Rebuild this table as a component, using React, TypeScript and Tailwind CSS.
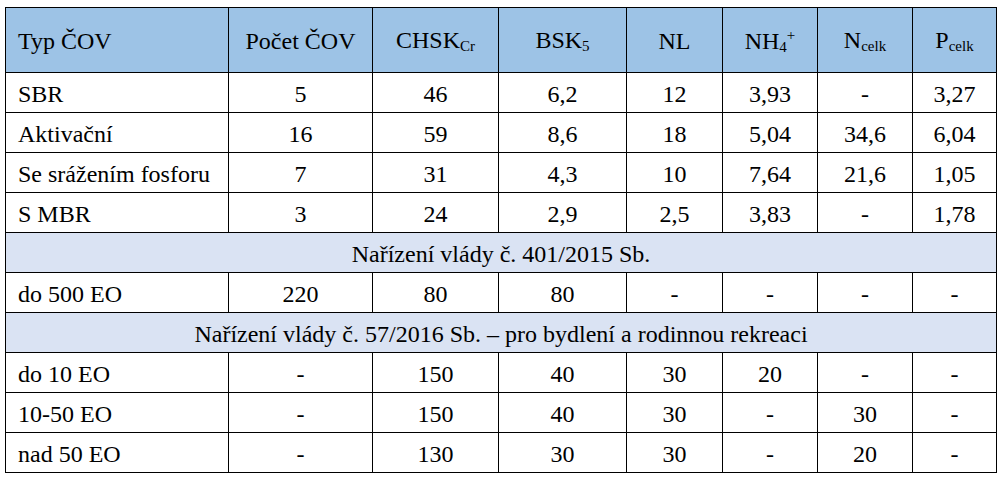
import React from "react";

type Row = string[];

const dataTop: Row[] = [
  ["SBR", "5", "46", "6,2", "12", "3,93", "-", "3,27"],
  ["Aktivační", "16", "59", "8,6", "18", "5,04", "34,6", "6,04"],
  ["Se srážením fosforu", "7", "31", "4,3", "10", "7,64", "21,6", "1,05"],
  ["S MBR", "3", "24", "2,9", "2,5", "3,83", "-", "1,78"],
];

const nv401: Row[] = [["do 500 EO", "220", "80", "80", "-", "-", "-", "-"]];

const nv57: Row[] = [
  ["do 10 EO", "-", "150", "40", "30", "20", "-", "-"],
  ["10-50 EO", "-", "150", "40", "30", "-", "30", "-"],
  ["nad 50 EO", "-", "130", "30", "30", "-", "20", "-"],
];

const serif = "[font-family:'Liberation_Serif','Times_New_Roman',serif]";
const cell = "border border-black h-[40px] pt-[2px] leading-none";

function DataRow({ row }: { row: Row }) {
  return (
    <tr>
      {row.map((v, i) => (
        <td
          key={i}
          className={i === 0 ? `${cell} text-left pl-[12px]` : `${cell} text-center`}
        >
          {v}
        </td>
      ))}
    </tr>
  );
}

function GroupRow({ title }: { title: string }) {
  return (
    <tr>
      <td colSpan={8} className={`${cell} bg-[#dae3f3] text-center`}>
        {title}
      </td>
    </tr>
  );
}

const sub = "text-[15px] align-[-3px]";

export default function App() {
  const head = "border border-black h-[65px] pt-[2px] bg-[#9dc3e6] font-normal leading-none";
  return (
    <div className={`w-[1004px] h-[480px] bg-white pt-[7px] pl-[5px] ${serif}`}>
      <table className={`border-collapse table-fixed text-black text-[24px] w-[991px] ${serif}`}>
        <colgroup>
          <col className="w-[223px]" />
          <col className="w-[144px]" />
          <col className="w-[126px]" />
          <col className="w-[128px]" />
          <col className="w-[96px]" />
          <col className="w-[95px]" />
          <col className="w-[95px]" />
          <col className="w-[84px]" />
        </colgroup>
        <thead>
          <tr>
            <th className={`${head} text-left pl-[12px]`}>Typ ČOV</th>
            <th className={`${head} text-center`}>Počet ČOV</th>
            <th className={`${head} text-center`}>
              CHSK<span className={sub}>Cr</span>
            </th>
            <th className={`${head} text-center`}>
              BSK<span className={sub}>5</span>
            </th>
            <th className={`${head} text-center`}>NL</th>
            <th className={`${head} text-center`}>
              NH<span className={sub}>4</span>
              <span className="text-[15px] align-[9px]">+</span>
            </th>
            <th className={`${head} text-center`}>
              N<span className={sub}>celk</span>
            </th>
            <th className={`${head} text-center`}>
              P<span className={sub}>celk</span>
            </th>
          </tr>
        </thead>
        <tbody>
          {dataTop.map((r, i) => (
            <DataRow key={"t" + i} row={r} />
          ))}
          <GroupRow title="Nařízení vlády č. 401/2015 Sb." />
          {nv401.map((r, i) => (
            <DataRow key={"a" + i} row={r} />
          ))}
          <GroupRow title="Nařízení vlády č. 57/2016 Sb. – pro bydlení a rodinnou rekreaci" />
          {nv57.map((r, i) => (
            <DataRow key={"b" + i} row={r} />
          ))}
        </tbody>
      </table>
    </div>
  );
}
